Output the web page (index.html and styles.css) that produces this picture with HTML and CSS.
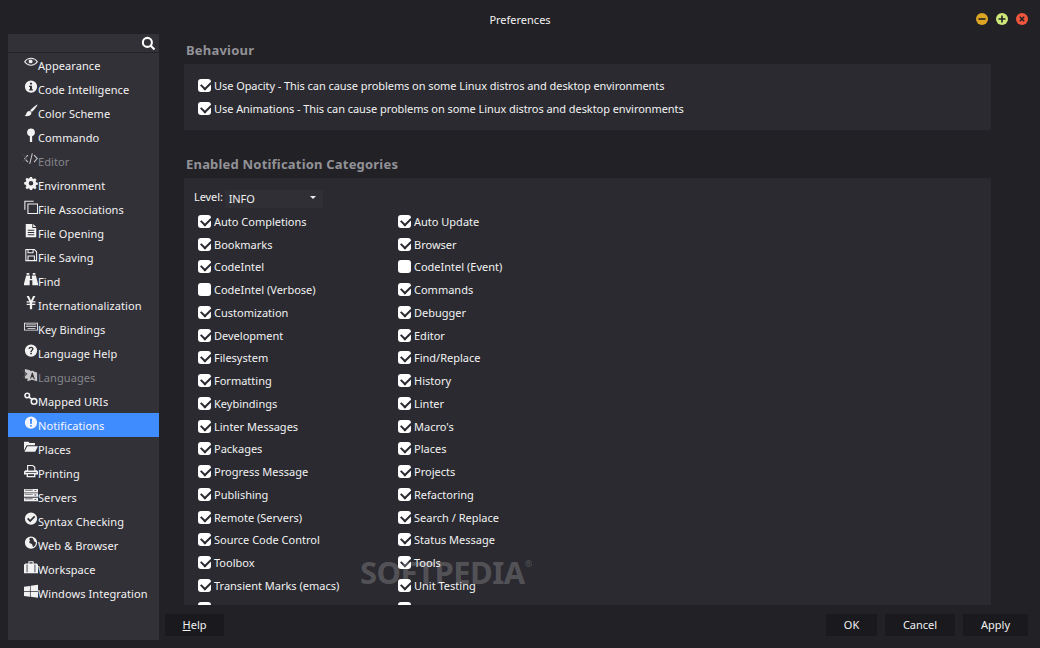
FILE: index.html
```html
<!DOCTYPE html>
<html lang="en">
<head>
  <meta charset="UTF-8">
  <title>Preferences</title>
  <link rel="stylesheet" href="styles.css">
</head>
<body>
  <div class="window">
    <header class="titlebar">
      <span class="title">Preferences</span>
      <div class="win-btns">
        <span class="win-btn min"><svg viewBox="0 0 12 12"><path d="M2.500 6h7"/></svg></span>
        <span class="win-btn max"><svg viewBox="0 0 12 12"><path d="M2.500 6h7M6 2.500v7"/></svg></span>
        <span class="win-btn close"><svg viewBox="0 0 12 12"><path d="M3.800 3.800l4.400 4.400M8.200 3.800l-4.400 4.400"/></svg></span>
      </div>
    </header>
    <div class="body">
      <aside class="sidebar">
        <div class="search">
          <svg class="search-icon" viewBox="0 0 16 16"><circle cx="6.800" cy="6.800" r="4.800"/><path d="M10.400 10.400l4 4"/></svg>
        </div>
        <ul class="nav">
          <li><svg viewBox="0 0 16 16"><path fill-rule="evenodd" d="M0 6.500C2 3.500 5 2 8 2s6 1.500 8 4.500C14 9.500 11 11 8 11S2 9.500 0 6.500zm8-3.500a3.500 3.500 0 1 0 0 7 3.500 3.500 0 0 0 0-7zM1.600 6.500C3 8.300 4.500 9.300 5.500 9.600 4 8 4 5 5.500 3.400 4.500 3.700 3 4.700 1.600 6.500zm12.800 0C13 4.700 11.500 3.700 10.500 3.400c1.500 1.600 1.500 4.600 0 6.200 1-.3 2.500-1.300 3.900-3.100z"/><circle cx="7.600" cy="6.200" r="2.200"/></svg>Appearance</li>
          <li><svg viewBox="0 0 16 16"><path fill-rule="evenodd" d="M8 .5a7 7 0 1 1 0 14 7 7 0 0 1 0-14zM6.800 3v2.200h2.400V3zM5.800 6.500v1.400h1v2.700h-1V12h4.400v-1.400h-1V6.500z"/></svg>Code Intelligence</li>
          <li><svg viewBox="0 0 16 16"><path d="M15.500.5c.4.4-3.500 6-6.500 8.700L7 7.200C9.700 4.200 15.100.1 15.500.5zM6.300 8c1.300.2 2.300 1.200 2.200 2.500-.2 2.700-4 3.900-8 3.300 1.800-1 1.800-2.200 2.500-3.800.6-1.200 2-2.200 3.300-2z"/></svg>Color Scheme</li>
          <li><svg viewBox="0 0 16 16"><path d="M8 .5a4.500 4.500 0 0 1 1.300 8.800V16H6.700V9.300A4.500 4.500 0 0 1 8 .5z"/></svg>Commando</li>
          <li class="dim"><span class="chevron"></span><svg viewBox="0 0 16 16"><path class="line" d="M4.500 3.500L.8 7.500l3.700 4M11.500 3.500l3.700 4-3.700 4M9.500 1.500l-3 12"/></svg>Editor</li>
          <li><svg viewBox="0 0 16 16"><path fill-rule="evenodd" d="M6.800 1h2.400l.4 1.900 1.300.6 1.700-1 1.700 1.700-1 1.700.6 1.300 1.900.4v2.400l-1.900.4-.6 1.300 1 1.700-1.700 1.700-1.700-1-1.300.5-.4 2H6.800l-.4-2-1.300-.5-1.700 1-1.700-1.700 1-1.700-.6-1.300L.2 9.500V7.100l1.900-.4.600-1.300-1-1.700 1.700-1.700 1.700 1 1.300-.6zM8 5.700a2.600 2.600 0 1 0 0 5.200 2.600 2.600 0 0 0 0-5.200z"/></svg>Environment</li>
          <li><svg viewBox="0 0 16 16"><path class="line" d="M1 11V1.500h10M4.500 4.500h11v11h-11z"/></svg>File Associations</li>
          <li><svg viewBox="0 0 16 16"><path fill-rule="evenodd" d="M2 0h7.500v4.500H14V15H2zM4.300 6.500v1.200h7.400V6.500zm0 2.600v1.200h7.400V9.100zm0 2.600v1.200h7.400v-1.200zM10.500 0L14 3.500h-3.500z"/></svg>File Opening</li>
          <li><svg viewBox="0 0 16 16"><path fill-rule="evenodd" d="M1.500 1H12l3 3v11H1.500zm1.200 1.200v11.600H4V8.500h8.500v5.300h1.300V4.500L11.500 2.200H11V6H4V2.200zM5.200 2.200v2.600h4.600V2.200zM5.200 9.700v4.100h6.100V9.700z"/></svg>File Saving</li>
          <li><svg viewBox="0 0 16 16"><path d="M3 1h3v2H3zM10 1h3v2h-3zM2.500 4H7v4h2V4h4.500L16 13v2H9.500V9.500h-3V15H0v-2z"/></svg>Find</li>
          <li><svg viewBox="0 0 16 16"><path d="M3 0h2.700L8 5 10.300 0H13l-3 6h3v1.500H9.300v1.300H13v1.500H9.300V15H6.700v-4.700H3V8.800h3.700V7.500H3V6h3z"/></svg>Internationalization</li>
          <li><svg viewBox="0 0 16 16"><path fill-rule="evenodd" d="M0 3h16v9H0zm1 1v7h14V4zm1 1h12v1H2zm0 2h12v1H2zm2 2h9v1H4z"/></svg>Key Bindings</li>
          <li><svg viewBox="0 0 16 16"><path fill-rule="evenodd" d="M8 .5a7 7 0 1 1 0 14 7 7 0 0 1 0-14zM8 3C6.300 3 5.200 3.900 5 5.500l1.700.3C6.900 5 7.300 4.600 8 4.600s1.200.4 1.200 1c0 1.100-2 1.400-2 3.400h1.700c0-1.400 2-1.700 2-3.600C10.900 4 9.700 3 8 3zM7.100 10v1.800h1.900V10z"/></svg>Language Help</li>
          <li class="dim"><span class="chevron"></span><svg viewBox="0 0 16 16"><path fill-rule="evenodd" d="M1 1l6 1.500v1L11 3v1l4 1v10l-6-1.500L4 15V12H1zm8 4.500L7 12l1 .3.500-1.600h2l.5 2 1.500.3L10 5.500z"/></svg>Languages</li>
          <li><svg viewBox="0 0 16 16"><circle class="line thick" cx="3.700" cy="4" r="2.600"/><circle class="line thick" cx="11.500" cy="10.800" r="3.200"/><path class="line thick" d="M5.500 5.500l3.500 3"/></svg>Mapped URIs</li>
          <li class="active"><svg viewBox="0 0 16 16"><path fill-rule="evenodd" d="M8 .5a7 7 0 1 1 0 14 7 7 0 0 1 0-14zM6.800 3l.3 6h1.800l.3-6zM7 10.200V12h2v-1.800z"/></svg>Notifications</li>
          <li><svg viewBox="0 0 16 16"><path d="M0 2h5l1.500 1.500h6V6H3L0 12zM3.800 7H16l-3.200 6.500H.6z"/></svg>Places</li>
          <li><svg viewBox="0 0 16 16"><path fill-rule="evenodd" d="M3.500 1h6.800L13 3.500V7h1.500L16 8.500V12h-3v3H3v-3H0V8.500L1.500 7h2zm1.300 1.300V7.500h6.900V4.200L9.800 2.300zM1.800 9v1h12.400V9zm2.700 2.700v2h7v-2z"/></svg>Printing</li>
          <li><svg viewBox="0 0 16 16"><path fill-rule="evenodd" d="M0 1h16v4H0zm12 1.500v1h2v-1zM0 6h16v4H0zm12 1.500v1h2v-1zM0 11h16v4H0zm12 1.500v1h2v-1zM1 2v.8h9V2zm0 5v.8h9V7zm0 5v.8h9V12z"/></svg>Servers</li>
          <li><svg viewBox="0 0 16 16"><path fill-rule="evenodd" d="M8 .5a7 7 0 1 1 0 14 7 7 0 0 1 0-14zM11.500 4.300L7 8.800 4.900 6.700 3.500 8.100 7 11.600l5.900-5.900z"/></svg>Syntax Checking</li>
          <li><svg viewBox="0 0 16 16"><path fill-rule="evenodd" d="M8 .5a7 7 0 1 1 0 14 7 7 0 0 1 0-14zM8.500 2C6 2 5.500 3.500 6.500 4.500c1 1-1 1.500-.5 3 .5 1.500 3 1 3.500 2.500.3 1 .3 2 1 2.500 2-1 3.300-3 3-5.500-1.500 0-2-1-2.500-2.500S10 2 8.500 2z"/></svg>Web &amp; Browser</li>
          <li><svg viewBox="0 0 16 16"><path fill-rule="evenodd" d="M5 1.500h6V4h3.500L16 5.500V15H0V5.500L1.500 4H5zm1.200 1.200V4h3.600V2.700zM3 5v9h1V5zm9 0v9h1V5z"/></svg>Workspace</li>
          <li><svg viewBox="0 0 16 16"><path d="M0 3.200l6.800-1V8H0zM7.600 2.100L16 .8V8H7.600zM0 8.800h6.800v5.900l-6.800-1zM7.600 8.800H16v7l-8.400-1.200z"/></svg>Windows Integration</li>
        </ul>
      </aside>
      <main class="main">
        <div class="scroll">
          <h2 class="heading first">Behaviour</h2>
          <section class="panel behaviour">
            <label class="check"><span class="box on"></span>Use Opacity - This can cause problems on some Linux distros and desktop environments</label>
            <label class="check"><span class="box on"></span>Use Animations - This can cause problems on some Linux distros and desktop environments</label>
          </section>
          <h2 class="heading">Enabled Notification Categories</h2>
          <section class="panel categories">
            <div class="level">
              <span class="level-label">Level:</span>
              <div class="select">INFO<span class="caret"></span></div>
            </div>
            <div class="grid">
              <label class="check"><span class="box on"></span>Auto Completions</label>
              <label class="check"><span class="box on"></span>Auto Update</label>
              <label class="check"><span class="box on"></span>Bookmarks</label>
              <label class="check"><span class="box on"></span>Browser</label>
              <label class="check"><span class="box on"></span>CodeIntel</label>
              <label class="check"><span class="box"></span>CodeIntel (Event)</label>
              <label class="check"><span class="box"></span>CodeIntel (Verbose)</label>
              <label class="check"><span class="box on"></span>Commands</label>
              <label class="check"><span class="box on"></span>Customization</label>
              <label class="check"><span class="box on"></span>Debugger</label>
              <label class="check"><span class="box on"></span>Development</label>
              <label class="check"><span class="box on"></span>Editor</label>
              <label class="check"><span class="box on"></span>Filesystem</label>
              <label class="check"><span class="box on"></span>Find/Replace</label>
              <label class="check"><span class="box on"></span>Formatting</label>
              <label class="check"><span class="box on"></span>History</label>
              <label class="check"><span class="box on"></span>Keybindings</label>
              <label class="check"><span class="box on"></span>Linter</label>
              <label class="check"><span class="box on"></span>Linter Messages</label>
              <label class="check"><span class="box on"></span>Macro's</label>
              <label class="check"><span class="box on"></span>Packages</label>
              <label class="check"><span class="box on"></span>Places</label>
              <label class="check"><span class="box on"></span>Progress Message</label>
              <label class="check"><span class="box on"></span>Projects</label>
              <label class="check"><span class="box on"></span>Publishing</label>
              <label class="check"><span class="box on"></span>Refactoring</label>
              <label class="check"><span class="box on"></span>Remote (Servers)</label>
              <label class="check"><span class="box on"></span>Search / Replace</label>
              <label class="check"><span class="box on"></span>Source Code Control</label>
              <label class="check"><span class="box on"></span>Status Message</label>
              <label class="check"><span class="box on"></span>Toolbox</label>
              <label class="check"><span class="box on"></span>Tools</label>
              <label class="check"><span class="box on"></span>Transient Marks (emacs)</label>
              <label class="check"><span class="box on"></span>Unit Testing</label>
              <label class="check"><span class="box on"></span></label>
              <label class="check"><span class="box on"></span></label>
            </div>
          </section>
          <div class="watermark">SOFTPEDIA<sup>®</sup></div>
        </div>
        <footer class="footer">
          <button class="btn help"><u>H</u>elp</button>
          <div class="actions">
            <button class="btn ok">OK</button>
            <button class="btn cancel">Cancel</button>
            <button class="btn apply">Apply</button>
          </div>
        </footer>
      </main>
    </div>
  </div>
</body>
</html>
```

FILE: styles.css
```css
:root {
  --bg: #222126;
  --sidebar: #323138;
  --panel: #2a2a30;
  --btn: #1a1a1e;
  --text: #f2f2f2;
  --heading: #929297;
  --blue: #3f8cff;
}
* { margin: 0; padding: 0; box-sizing: border-box; }
html, body { height: 100%; overflow: hidden; }
body {
  font-family: "Noto Sans", "Open Sans", sans-serif;
  font-size: 11px;
  background-color: var(--bg);
  color: var(--text);
}
.window {
  width: 1040px;
  height: 648px;
  display: flex;
  flex-direction: column;
}

/* title bar */
.titlebar {
  height: 34px;
  flex: none;
  display: flex;
  align-items: center;
  justify-content: center;
  position: relative;
  padding-top: 4px;
}
.win-btns {
  position: absolute;
  right: 12px;
  top: 12.500px;
  display: flex;
  gap: 8px;
}
.win-btn {
  width: 12px;
  height: 12px;
  border-radius: 50%;
  display: block;
}
.win-btn svg { display: block; width: 12px; height: 12px; fill: none; stroke: #222126; stroke-width: 1.600; }
.win-btn.min { background: #dda524; }
.win-btn.max { background: #cfe87a; }
.win-btn.close { background: #f0563b; }

.body {
  flex: 1;
  min-height: 0;
  display: flex;
  padding: 0 8px 8px;
}

/* sidebar */
.sidebar {
  width: 151px;
  flex: none;
  background: var(--sidebar);
}
.search {
  height: 19px;
  border-bottom: 1px solid #24232a;
  display: flex;
  justify-content: flex-end;
  align-items: center;
  padding-right: 3px;
}
.search-icon { width: 15px; height: 15px; fill: none; stroke: #fff; stroke-width: 2.200; }
.nav { list-style: none; letter-spacing: 0.080px; }
.nav li {
  height: 24px;
  display: flex;
  align-items: center;
  padding-left: 16px;
  position: relative;
  white-space: nowrap;
}
.nav li svg {
  width: 14px;
  height: 14px;
  flex: none;
  fill: currentColor;
  margin-top: -4px;
}
.nav li svg .line { fill: none; stroke: currentColor; stroke-width: 1.200; }
.nav li svg .line.thick { stroke-width: 1.800; }
.nav li.dim { color: #85858a; }
.nav li.dim svg { color: #c8c8c8; }
.nav li.active { background: var(--blue); color: #f4f6ff; }
.chevron {
  position: absolute;
  left: 15px;
  top: 6px;
  width: 6px;
  height: 6px;
  border-top: 1px solid #45444b;
  border-right: 1px solid #45444b;
  transform: rotate(45deg);
  margin-left: -3px;
}

/* main area */
.main {
  flex: 1;
  min-width: 0;
  display: flex;
  flex-direction: column;
  padding-left: 6px;
}
.scroll {
  height: 571px;
  flex: none;
  overflow: hidden;
  position: relative;
  padding-left: 19px;
}
.heading {
  font-size: 13px;
  font-weight: 700;
  color: var(--heading);
  line-height: 18px;
  padding-left: 2px;
  margin-top: 25px;
  margin-bottom: 5px;
  letter-spacing: 0.200px;
}
.heading.first { margin-top: 7px; margin-bottom: 5px; }
.panel {
  width: 807px;
  background: var(--panel);
}
.behaviour {
  height: 66px;
  padding: 10px 14px 0;
  display: flex;
  flex-direction: column;
  letter-spacing: -0.060px;
}
.behaviour .check { height: 23px; }
.check {
  display: flex;
  align-items: center;
  gap: 3px;
  white-space: nowrap;
}
.box {
  width: 13px;
  height: 13px;
  background: #fff;
  border-radius: 3px;
  flex: none;
  position: relative;
}
.box.on::after {
  content: "";
  position: absolute;
  left: 2.500px;
  top: 2px;
  width: 8px;
  height: 5px;
  border-left: 2.500px solid #2a2a30;
  border-bottom: 2.500px solid #2a2a30;
  transform: rotate(-45deg);
}
.categories { padding: 12px 14px 0; height: 440px; }
.level {
  display: flex;
  align-items: flex-start;
  margin-left: -4px;
  height: 19px;
  margin-bottom: 1px;
  letter-spacing: -0.100px;
}
.level-label { margin-right: 2px; line-height: 13px; }
.select {
  width: 98px;
  height: 18px;
  background: #2f2f35;
  padding-left: 4px;
  line-height: 18px;
  position: relative;
}
.caret {
  position: absolute;
  right: 7px;
  top: 6px;
  border-left: 3px solid transparent;
  border-right: 3px solid transparent;
  border-top: 3px solid #eee;
}
.grid {
  display: grid;
  grid-template-columns: 200px 200px;
  grid-auto-rows: 22.750px;
}

/* watermark */
.watermark {
  position: absolute;
  left: 195px;
  top: 520px;
  font-size: 31px;
  font-weight: 700;
  letter-spacing: -0.500px;
  line-height: 36px;
  color: rgba(255, 255, 255, 0.2);
  white-space: nowrap;
  pointer-events: none;
}
.watermark sup { font-size: 9px; vertical-align: 17px; line-height: 0; }

/* bottom buttons */
.footer {
  flex: none;
  display: flex;
  justify-content: space-between;
  margin-top: 9px;
  height: 22px;
  padding-right: 4px;
}
.actions { display: flex; gap: 8px; }
.btn {
  height: 22px;
  background: var(--btn);
  border: none;
  color: var(--text);
  font: inherit;
  padding-bottom: 1px;
}
.help { width: 59px; }
.ok { width: 51px; }
.cancel { width: 70px; }
.apply { width: 65px; }
```
